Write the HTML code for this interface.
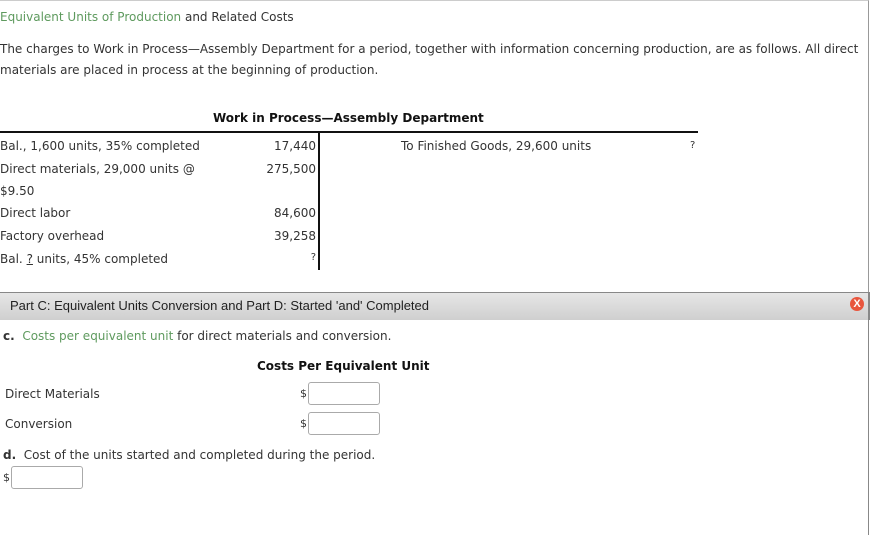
<!DOCTYPE html>
<html><head><style>
body{margin:0;width:870px;height:535px;overflow:hidden;background:#fff;font-family:"DejaVu Sans","Liberation Sans",sans-serif;font-size:12px;color:#333;position:relative}
.a{position:absolute;white-space:nowrap}
.g{color:#5e9a5e}
.r{text-align:right}
.box{position:absolute;width:70px;height:21px;border:1px solid #aaa;border-radius:3px;background:#fff}
</style></head><body>
<div class="a" style="left:0;top:0;width:868px;height:292px;border-top:1px solid #ccc;border-right:1px solid #999"></div>
<div class="a" style="left:0;top:10px"><span class="g">Equivalent Units of Production</span> and Related Costs</div>
<div class="a" style="left:0;top:42px">The charges to Work in Process—Assembly Department for a period, together with information concerning production, are as follows. All direct</div>
<div class="a" style="left:0;top:63px">materials are placed in process at the beginning of production.</div>
<div class="a" style="left:213px;top:111px;font-weight:bold;color:#111">Work in Process—Assembly Department</div>
<div class="a" style="left:0;top:131px;width:698px;height:2px;background:#111"></div>
<div class="a" style="left:318px;top:131px;width:2px;height:139px;background:#111"></div>
<div class="a" style="left:0;top:139px">Bal., 1,600 units, 35% completed</div>
<div class="a" style="left:0;top:162px">Direct materials, 29,000 units @</div>
<div class="a" style="left:0;top:184px">$9.50</div>
<div class="a" style="left:0;top:206px">Direct labor</div>
<div class="a" style="left:0;top:229px">Factory overhead</div>
<div class="a" style="left:0;top:252px">Bal. <u>?</u> units, 45% completed</div>
<div class="a r" style="left:216px;width:100px;top:139px">17,440</div>
<div class="a r" style="left:216px;width:100px;top:162px">275,500</div>
<div class="a r" style="left:216px;width:100px;top:206px">84,600</div>
<div class="a r" style="left:216px;width:100px;top:229px">39,258</div>
<div class="a r" style="left:216px;width:100px;top:252px;font-size:10px">?</div>
<div class="a" style="left:401px;top:139px">To Finished Goods, 29,600 units</div>
<div class="a" style="left:690px;top:140px;font-size:10px">?</div>
<div class="a" style="left:0;top:292px;width:868px;height:27px;border-top:1px solid #888;border-right:2px solid #888;background:linear-gradient(#e6e6e6,#cfcfcf)"></div>
<div class="a" style="left:10px;top:298px;font-family:'Liberation Sans',sans-serif;font-size:13px;color:#222">Part C: Equivalent Units Conversion and Part D: Started 'and' Completed</div>
<div class="a" style="left:850px;top:297px;width:14px;height:14px;border-radius:50%;background:#e8553d;color:#fff;font:bold 11px 'Liberation Sans',sans-serif;text-align:center;line-height:14px">X</div>
<div class="a" style="left:868px;top:320px;width:1px;height:215px;background:#888"></div>
<div class="a" style="left:3px;top:329px"><b>c.</b>&nbsp; <span class="g">Costs per equivalent unit</span> for direct materials and conversion.</div>
<div class="a" style="left:257px;top:359px;font-weight:bold;color:#111">Costs Per Equivalent Unit</div>
<div class="a" style="left:5px;top:387px">Direct Materials</div>
<div class="a" style="left:300px;top:387px;font-size:11px">$</div>
<div class="box" style="left:308px;top:382px"></div>
<div class="a" style="left:5px;top:417px">Conversion</div>
<div class="a" style="left:300px;top:417px;font-size:11px">$</div>
<div class="box" style="left:308px;top:412px"></div>
<div class="a" style="left:3px;top:448px"><b>d.</b>&nbsp; Cost of the units started and completed during the period.</div>
<div class="a" style="left:3px;top:471px;font-size:11px">$</div>
<div class="box" style="left:11px;top:466px"></div>
</body></html>
